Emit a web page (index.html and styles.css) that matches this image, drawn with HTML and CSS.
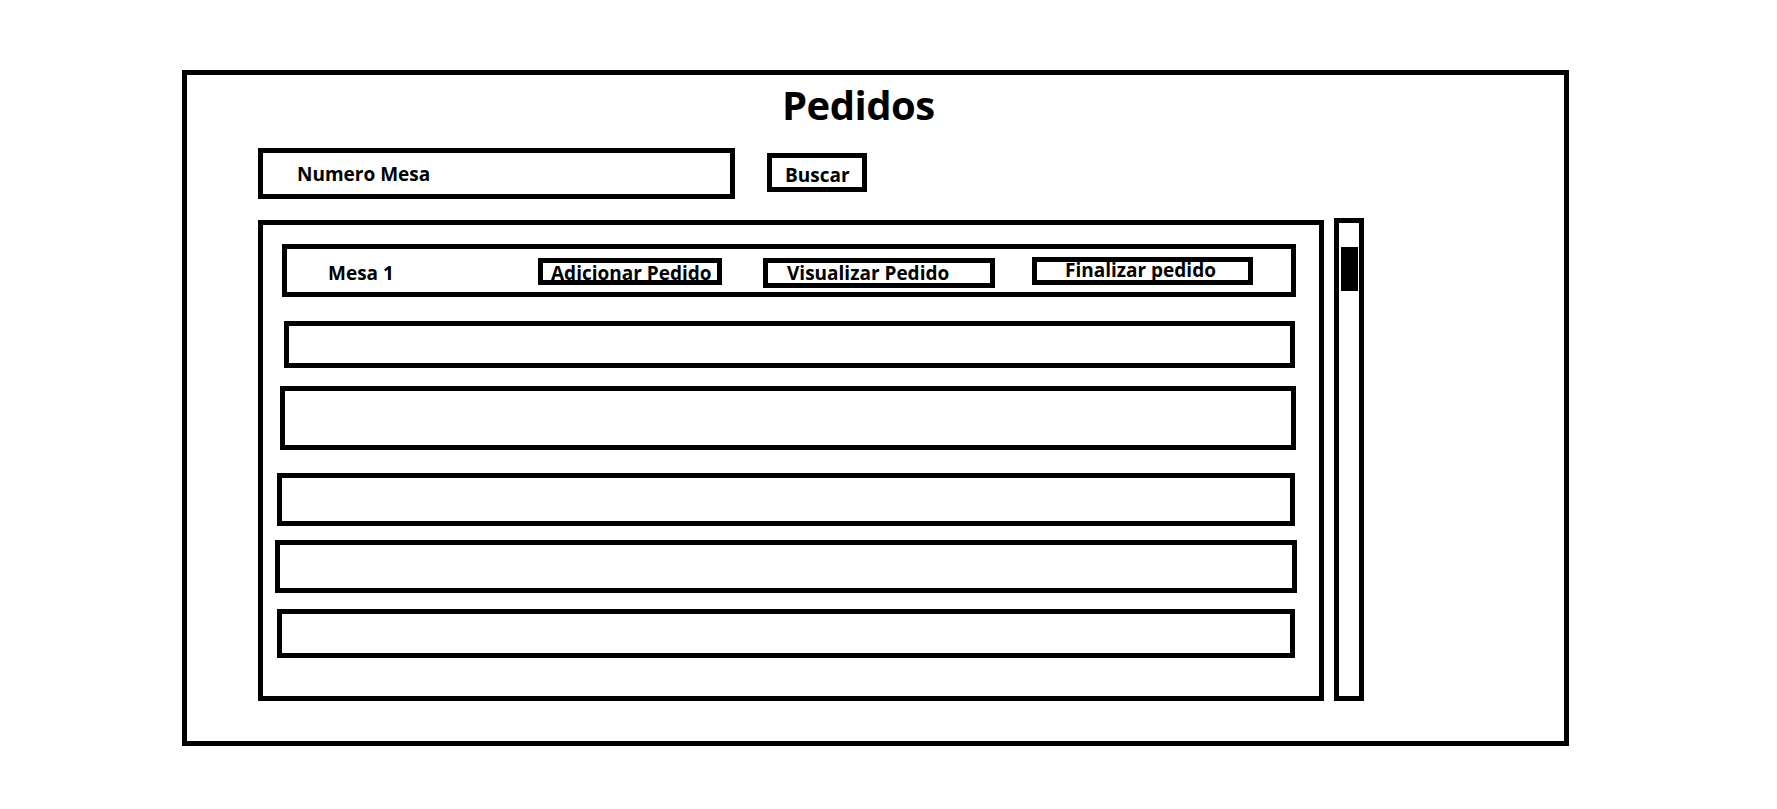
FILE: index.html
```html
<!DOCTYPE html>
<html lang="pt">
<head>
<meta charset="utf-8">
<title>Pedidos</title>
<link rel="stylesheet" href="styles.css">
</head>
<body>
<div class="frame">
  <h1 class="title">Pedidos</h1>
  <div class="search">
    <div class="search-input">Numero Mesa</div>
    <div class="search-btn">Buscar</div>
  </div>
  <div class="list-area">
    <div class="list">
      <div class="row row-1">
        <span class="mesa">Mesa 1</span>
        <span class="btn btn-add">Adicionar Pedido</span>
        <span class="btn btn-view">Visualizar Pedido</span>
        <span class="btn btn-end">Finalizar pedido</span>
      </div>
      <div class="row row-2"></div>
      <div class="row row-3"></div>
      <div class="row row-4"></div>
      <div class="row row-5"></div>
      <div class="row row-6"></div>
    </div>
    <div class="scrollbar"><div class="thumb"></div></div>
  </div>
</div>
</body>
</html>
```
FILE: styles.css
```css
* { box-sizing: border-box; }
html, body { margin: 0; padding: 0; background: #fff; }
body {
  font-family: "Open Sans", "Liberation Sans", sans-serif;
  font-weight: 700;
  color: #000;
  width: 1777px;
  height: 809px;
  overflow: hidden;
}
.frame {
  margin: 70px 0 0 182px;
  width: 1387px;
  height: 676px;
  border: 5px solid #000;
  display: flex;
  flex-direction: column;
}
.title {
  margin: 6px 0 0 595px;
  font-size: 40px;
  line-height: 48px;
  font-weight: 700;
  height: 48px;
  letter-spacing: -0.5px;
}
.search {
  display: flex;
  align-items: flex-start;
  margin: 19px 0 0 71px;
}
.search-input {
  width: 477px;
  height: 51px;
  border: 5px solid #000;
  font-size: 19px;
  line-height: 22px;
  padding: 10px 0 0 34px;
}
.search-btn {
  margin: 5px 0 0 32px;
  width: 100px;
  height: 39px;
  border: 5px solid #000;
  font-size: 19px;
  line-height: 22px;
  padding: 6px 0 0 13px;
}
.list-area {
  display: flex;
  align-items: flex-start;
  margin: 19px 0 0 71px;
}
.list {
  margin-top: 2px;
  width: 1066px;
  height: 481px;
  border: 5px solid #000;
  display: flex;
  flex-direction: column;
  align-items: flex-start;
}
.scrollbar {
  margin-left: 10px;
  width: 30px;
  height: 483px;
  border: 5px solid #000;
  padding: 24px 0 0 2px;
}
.thumb {
  width: 17px;
  height: 44px;
  background: #000;
}
.row {
  border: 5px solid #000;
  flex: none;
}
.row-1 { margin: 19px 0 0 19px; width: 1014px; height: 53px; display: flex; align-items: flex-start; }
.row-2 { margin: 24px 0 0 21px; width: 1011px; height: 47px; }
.row-3 { margin: 18px 0 0 17px; width: 1016px; height: 64px; }
.row-4 { margin: 23px 0 0 14px; width: 1018px; height: 53px; }
.row-5 { margin: 14px 0 0 12px; width: 1022px; height: 53px; }
.row-6 { margin: 16px 0 0 14px; width: 1018px; height: 49px; }
.mesa {
  margin: 13px 0 0 41px;
  width: 210px;
  flex: none;
  font-size: 19px;
  line-height: 22px;
}
.btn {
  flex: none;
  border: 5px solid #000;
  font-size: 19px;
  line-height: 14px;
  white-space: nowrap;
}
.btn-add { margin-top: 9px; width: 184px; height: 27px; padding: 3px 0 0 8px; }
.btn-view { margin: 9px 0 0 41px; width: 232px; height: 30px; padding: 3px 0 0 19px; }
.btn-end { margin: 8px 0 0 37px; width: 221px; height: 28px; padding: 1px 0 0 28px; }
```
